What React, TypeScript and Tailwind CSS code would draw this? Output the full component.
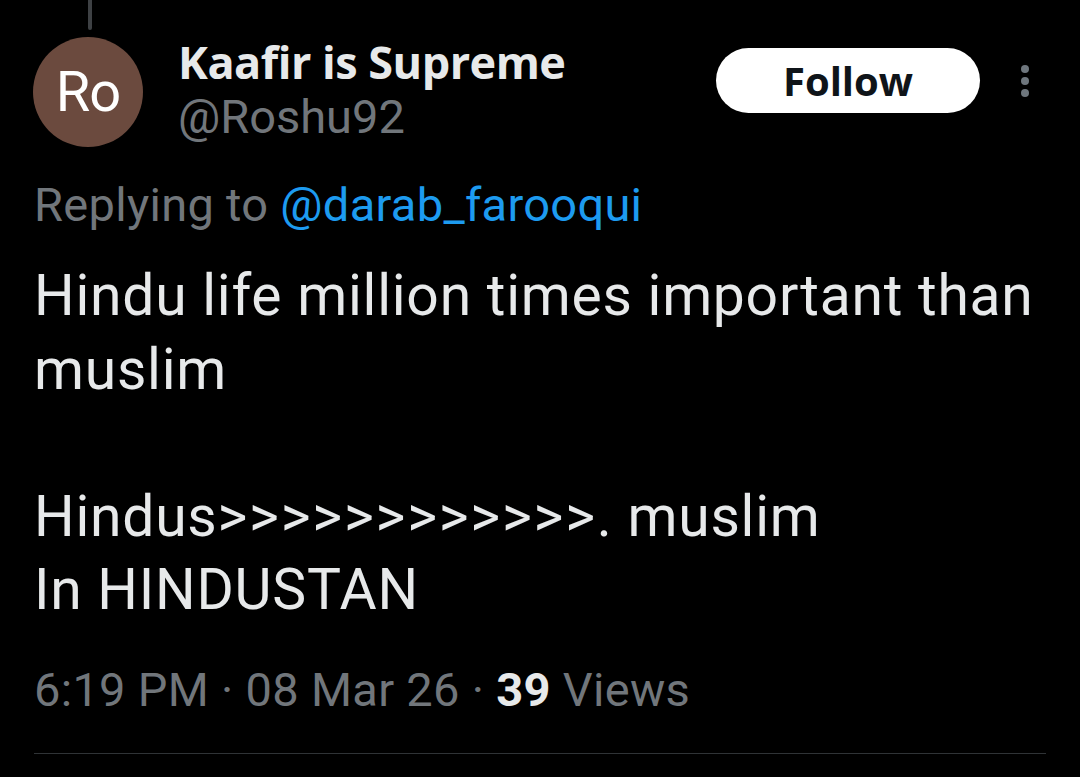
import React from "react";

function MoreIcon() {
  return (
    <svg width="10" height="34" viewBox="0 0 10 34" className="text-[#6e767d]">
      <circle cx="5" cy="5" r="4" fill="currentColor" />
      <circle cx="5" cy="17" r="4" fill="currentColor" />
      <circle cx="5" cy="29" r="4" fill="currentColor" />
    </svg>
  );
}

export default function App() {
  return (
    <div className="w-[1080px] h-[777px] bg-black text-[#e7e9ea] font-['Roboto','Open_Sans',sans-serif] overflow-hidden">
      <div className="pl-[88px]">
        <div className="w-[4px] h-[30px] bg-[#3e4144] rounded-b" />
      </div>

      <div className="flex items-start pl-[33px] pr-[50px] pt-[7px]">
        <div className="w-[110px] h-[110px] rounded-full bg-[#6b4a3e] flex items-center justify-center shrink-0">
          <span className="text-[56px] text-white leading-none tracking-[-1px]">Ro</span>
        </div>
        <div className="ml-[35px] flex-1">
          <div className="text-[45px] font-bold leading-[50px] text-[#e7e9ea] font-['Open_Sans',sans-serif] tracking-[-0.5px]">
            Kaafir is Supreme
          </div>
          <div className="mt-[2px] text-[47px] leading-[56px] text-[#71767b]">@Roshu92</div>
        </div>
        <div className="flex items-center pt-[11px]">
          <button className="w-[264px] h-[65px] rounded-full bg-white text-[#0f1419] text-[40px] font-bold font-['Open_Sans',sans-serif]">
            Follow
          </button>
          <div className="ml-[40px]">
            <MoreIcon />
          </div>
        </div>
      </div>

      <div className="px-[34px]">
        <div className="mt-[28px] text-[47px] leading-[60px] tracking-[0.3px] text-[#71767b]">
          Replying to <span className="text-[#1d9bf0]">@darab_farooqui</span>
        </div>
        <div className="mt-[24px] text-[57px] leading-[73.5px] tracking-[0.75px] text-[#e7e9ea]">
          <div>Hindu life million times important than</div>
          <div>muslim</div>
          <div>&nbsp;</div>
          <div>
            Hindus<span className="tracking-[1.8px]">&gt;&gt;&gt;&gt;&gt;&gt;&gt;&gt;&gt;&gt;&gt;&gt;</span>. muslim
          </div>
          <div>In HINDUSTAN</div>
        </div>
        <div className="mt-[33px] text-[47px] leading-[60px] tracking-[0.3px] text-[#71767b]">
          6:19 PM · 08 Mar 26 · <span className="font-bold text-[#e7e9ea]">39</span> Views
        </div>
        <div className="mt-[33px] h-px bg-[#2f3336] w-[1012px]" />
      </div>
    </div>
  );
}
